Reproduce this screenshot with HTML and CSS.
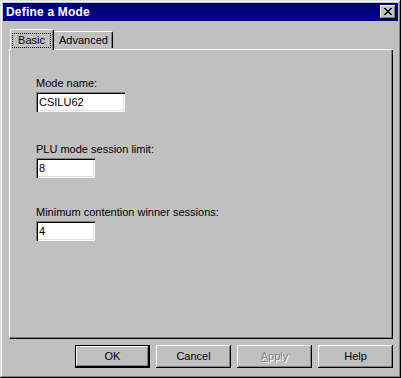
FILE: index.html
```html
<!DOCTYPE html>
<html>
<head>
  <title>Define a Mode</title>
  <meta charset="UTF-8">
  <link rel="stylesheet" href="styles.css">
</head>
<body>
  <div class="window">
    <div class="titlebar">
      <span class="title">Define a Mode</span>
      <div class="close">
        <svg width="8" height="7" viewBox="0 0 8 7">
          <path d="M0 0h2v1h1v1h2v-1h1v-1h2v1h-1v1h-1v1h-1v1h1v1h1v1h1v1h-2v-1h-1v-1h-2v1h-1v1h-2v-1h1v-1h1v-1h1v-1h-1v-1h-1v-1h-1z" fill="#000"/>
        </svg>
      </div>
    </div>
    <div class="content">
      <div class="tabs">
        <div class="tab selected"><span class="focus">Basic</span></div>
        <div class="tab">Advanced</div>
      </div>
      <div class="panel">
        <div class="group">
          <div class="label">Mode name:</div>
          <div class="field wide">CSILU62</div>
        </div>
        <div class="group">
          <div class="label">PLU mode session limit:</div>
          <div class="field">8</div>
        </div>
        <div class="group">
          <div class="label">Minimum contention winner sessions:</div>
          <div class="field">4</div>
        </div>
      </div>
      <div class="buttons">
        <div class="btn default">OK</div>
        <div class="btn">Cancel</div>
        <div class="btn disabled"><u>A</u>pply</div>
        <div class="btn">Help</div>
      </div>
    </div>
  </div>
</body>
</html>
```

FILE: styles.css
```css
body {
  margin: 0;
  padding: 0;
  background: #c0c0c0;
  font-family: "Liberation Sans", Arial, sans-serif;
  font-size: 11px;
  color: #000;
}
.window {
  width: 401px;
  height: 378px;
  box-sizing: border-box;
  padding: 3px;
  background: #c0c0c0;
  box-shadow: inset -1px -1px #000, inset 1px 1px #dfdfdf, inset -2px -2px #808080, inset 2px 2px #fff;
  display: flex;
  flex-direction: column;
}
.titlebar {
  height: 18px;
  background: #000080;
  display: flex;
  align-items: center;
  justify-content: space-between;
  padding: 0 2px 0 3px;
}
.title {
  color: #fff;
  font-weight: bold;
  font-size: 12px;
  letter-spacing: 0.2px;
}
.close {
  width: 16px;
  height: 14px;
  background: #c0c0c0;
  box-shadow: inset -1px -1px #000, inset 1px 1px #fff, inset -2px -2px #808080;
  display: flex;
  align-items: center;
  justify-content: center;
}
.close svg {
  display: block;
  margin: 0 1px 1px 0;
}
.content {
  flex: 1;
  display: flex;
  flex-direction: column;
  padding: 8px 5px 7px 6px;
}
.tabs {
  display: flex;
  align-items: flex-end;
  height: 20px;
  border-bottom: 1px solid #fff;
  padding-left: 1px;
}
.tab {
  height: 17px;
  width: 59px;
  box-sizing: border-box;
  padding: 0 0 0 5px;
  line-height: 16px;
  border-top: 1px solid #fff;
  border-right: 1px solid #000;
  border-radius: 0 2px 0 0;
  box-shadow: inset -1px 0 #808080;
  margin-bottom: 1px;
}
.tab.selected {
  height: 21px;
  width: 44px;
  margin-bottom: -1px;
  padding: 3px 2px 0 1px;
  border-left: 1px solid #fff;
  border-radius: 2px 2px 0 0;
  background: #c0c0c0;
}
.focus {
  display: block;
  height: 15px;
  line-height: 13px;
  box-sizing: border-box;
  border: 1px dotted #000;
  text-align: center;
}
.panel {
  flex: 1;
  border-left: 1px solid #fff;
  border-right: 1px solid #000;
  border-bottom: 1px solid #000;
  box-shadow: inset -1px -1px #808080;
  padding: 27px 0 0 26px;
}
.group {
  margin-bottom: 31px;
}
.group + .group + .group {
  margin-top: -3px;
}
.label {
  line-height: 13px;
  margin-bottom: 2px;
}
.field {
  width: 59px;
  height: 20px;
  box-sizing: border-box;
  background: #fff;
  box-shadow: inset 1px 1px #808080, inset 2px 2px #000, inset -1px -1px #fff, inset -2px -2px #dfdfdf;
  padding: 0 0 0 3px;
  line-height: 20px;
}
.field.wide {
  width: 89px;
}
.buttons {
  display: flex;
  justify-content: flex-end;
  gap: 6px;
  margin-top: 6px;
}
.btn {
  width: 75px;
  height: 23px;
  box-sizing: border-box;
  box-shadow: inset -1px -1px #000, inset 1px 1px #fff, inset -2px -2px #808080;
  text-align: center;
  line-height: 22px;
}
.btn.default {
  border: 1px solid #000;
  line-height: 20px;
}
.btn.disabled {
  color: #808080;
  text-shadow: 1px 1px #fff;
}
```
